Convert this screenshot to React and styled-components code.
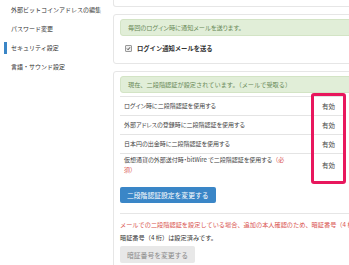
import styled, { createGlobalStyle } from "styled-components";

const GlobalStyle = createGlobalStyle`
  html, body {
    margin: 0;
    padding: 0;
    background: #ffffff;
    overflow: hidden;
  }
  body {
    font-family: "Noto Sans CJK JP", "Noto Sans", sans-serif;
    color: #333333;
  }
`;

const menu = [
    { label: "外部ビットコインアドレスの編集" },
    { label: "パスワード変更" },
    { label: "セキュリティ設定", active: true },
    { label: "言語・サウンド設定" },
];

const rows = [
    { label: "ログイン時に二段階認証を使用する", value: "有効" },
    { label: "外部アドレスの登録時に二段階認証を使用する", value: "有効" },
    { label: "日本円の出金時に二段階認証を使用する", value: "有効" },
    { label: "仮想通貨の外部送付時・bitWire で二段階認証を使用する", required: true, value: "有効" },
];

export default function App () {

    return (
        <Page>
            <GlobalStyle />
            <Sidebar>
                {menu.map((item) => (
                    <MenuItem key={item.label}>
                        <Marker $active={item.active} />
                        {item.label}
                    </MenuItem>
                ))}
            </Sidebar>
            <Main>
                <CutCard />
                <Card>
                    <Alert $tight>毎回のログイン時に通知メールを送ります。</Alert>
                    <CheckRow>
                        <CheckBox>
                            <svg viewBox="0 0 10 10" width="5" height="5">
                                <path d="M2 5.2 L4.2 7.4 L8 2.6" fill="none" stroke="#333" strokeWidth="1.8" />
                            </svg>
                        </CheckBox>
                        ログイン通知メールを送る
                    </CheckRow>
                </Card>
                <Card>
                    <Alert>現在、二段階認証が設定されています。（メールで受取る）</Alert>
                    <Table>
                        {rows.map((row) => (
                            <Row key={row.label}>
                                <RowLabel>
                                    {row.label}
                                    {row.required && <Required>（必須）</Required>}
                                </RowLabel>
                                <RowValue>{row.value}</RowValue>
                            </Row>
                        ))}
                        <Highlight />
                    </Table>
                    <PrimaryButton>二段階認証設定を変更する</PrimaryButton>
                    <PinSection>
                        <Warning>メールでの二段階認証を設定している場合、追加の本人確認のため、暗証番号（4 桁）の設定が必要です。</Warning>
                        <PinText>暗証番号（4 桁）は設定済みです。</PinText>
                        <GreyButton>暗証番号を変更する</GreyButton>
                    </PinSection>
                </Card>
            </Main>
        </Page>
    );
};

const Page = styled.div`
    display: flex;
    width: 349px;
    height: 265px;
    overflow: hidden;
`;

const Sidebar = styled.div`
    display: flex;
    flex-direction: column;
    flex: 0 0 104px;
    background-color: #FFFFFF;
`;

const MenuItem = styled.div`
    display: flex;
    align-items: center;
    gap: 4px;
    height: 19px;

    font-size: 6px;
    color: #333333;
    white-space: nowrap;
`;

const Marker = styled.span`
    width: 3px;
    height: 12px;
    margin-left: 4px;
    background-color: ${(p) => (p.$active ? "#3b86c6" : "transparent")};
`;

const Main = styled.div`
    display: flex;
    flex-direction: column;
    gap: 7px;
    flex: 0 0 250px;
    min-width: 0;
    padding-left: 9px;
`;

const CutCard = styled.div`
    flex-shrink: 0;
    height: 6px;
    border: 1px solid #e6e6e6;
    border-top: none;
    border-radius: 0 0 3px 3px;
    background-color: #FFFFFF;
`;

const Card = styled.div`
    display: flex;
    flex-direction: column;
    flex-shrink: 0;
    min-width: 0;
    padding: 4px 6px 9px;
    border: 1px solid #e6e6e6;
    border-radius: 3px;
    background-color: #FFFFFF;
`;

const Alert = styled.div`
    display: flex;
    align-items: center;
    flex-shrink: 0;
    height: 15px;
    padding: 0 7px;
    border: 1px solid #d3e4c5;
    border-radius: 3px;
    background-color: #e1eed8;

    font-size: 6.2px;
    font-feature-settings: ${(p) => (p.$tight ? '"palt"' : "normal")};
    color: #6a8a58;
    white-space: nowrap;
`;

const CheckRow = styled.div`
    display: flex;
    align-items: center;
    gap: 5px;
    height: 12px;
    margin-top: 6px;
    padding-left: 5px;

    font-size: 6.3px;
    font-weight: bold;
    color: #333333;
`;

const CheckBox = styled.span`
    display: flex;
    align-items: center;
    justify-content: center;
    width: 5px;
    height: 5px;
    border: 0.5px solid #999999;
    border-radius: 1px;
    background-color: #eeeeee;
`;

const Table = styled.div`
    position: relative;
    display: flex;
    flex-direction: column;
    margin: 3px 10px 0 0;
`;

const Row = styled.div`
    display: grid;
    grid-template-columns: 1fr 35px;
    align-items: center;
    min-height: 18px;
    border-top: 1px solid #e4e4e4;
`;

const RowLabel = styled.div`
    padding: 1px 24px 1px 4px;

    font-size: 6px;
    line-height: 10px;
    font-feature-settings: "palt";
    color: #444444;
`;

const Required = styled.span`
    font-feature-settings: normal;
    color: #d9534f;
`;

const RowValue = styled.div`
    text-align: center;

    font-size: 6.5px;
    color: #444444;
`;

const Highlight = styled.div`
    position: absolute;
    top: -3px;
    bottom: -8px;
    right: 0;
    width: 35px;
    box-sizing: border-box;
    border: 3px solid #e8175d;
    border-radius: 3px;
`;

const PrimaryButton = styled.button`
    align-self: flex-start;
    height: 16px;
    margin-top: 11px;
    padding: 0 7px;
    border: none;
    border-radius: 2px;
    background-color: #3a86c7;

    font-family: inherit;
    font-size: 6.8px;
    color: #FFFFFF;
`;

const PinSection = styled.div`
    display: flex;
    flex-direction: column;
    margin-top: 10px;
    padding-top: 6px;
    border-top: 1px solid #e6e6e6;
`;

const Warning = styled.div`
    overflow: hidden;

    font-size: 6.2px;
    line-height: 10px;
    color: #d9534f;
    white-space: nowrap;
`;

const PinText = styled.div`
    margin-top: 3px;

    font-size: 6.2px;
    line-height: 10px;
    color: #333333;
`;

const GreyButton = styled.button`
    align-self: flex-start;
    height: 17px;
    margin-top: 3px;
    padding: 0 7px;
    border: none;
    border-radius: 2px;
    background-color: #e8e8e8;

    font-family: inherit;
    font-size: 6.8px;
    color: #888888;
`;
